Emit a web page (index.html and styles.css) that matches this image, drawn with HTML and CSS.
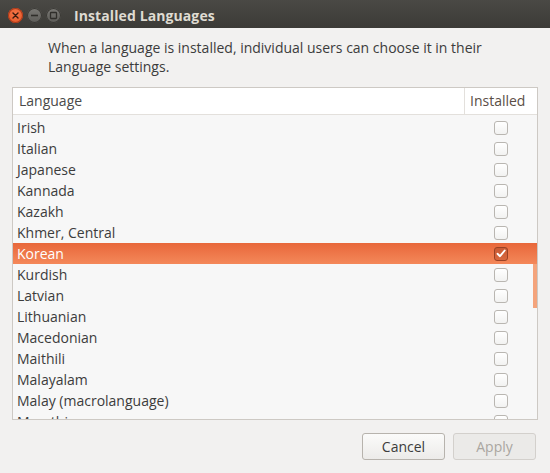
FILE: index.html
```html
<!DOCTYPE html>
<html>
<head>
<meta charset="utf-8">
<link rel="stylesheet" href="styles.css">
</head>
<body>
<div class="window">
  <div class="titlebar">
    <div class="wbtns">
      <span class="wb close"><svg width="15" height="15" viewBox="0 0 15 15"><path d="M5 5 L10 10 M10 5 L5 10" stroke="#3a1a0e" stroke-width="1.4" stroke-linecap="round"/></svg></span>
      <span class="wb"><svg width="15" height="15" viewBox="0 0 15 15"><path d="M4 7.5 H11" stroke="#2f2e2a" stroke-width="1.6"/></svg></span>
      <span class="wb"><svg width="15" height="15" viewBox="0 0 15 15"><rect x="4.5" y="4.5" width="6" height="6" rx="0.8" fill="none" stroke="#2f2e2a" stroke-width="1.3"/></svg></span>
    </div>
    <div class="title">Installed Languages</div>
  </div>
  <div class="content">
    <p class="desc">When a language is installed, individual users can choose it in their Language settings.</p>
    <div class="table">
      <div class="thead">
        <div class="th lang">Language</div>
        <div class="th inst">Installed</div>
      </div>
      <div class="tbody">
        <div class="row"><span class="name">Irish</span><span class="cb"></span></div>
        <div class="row"><span class="name">Italian</span><span class="cb"></span></div>
        <div class="row"><span class="name">Japanese</span><span class="cb"></span></div>
        <div class="row"><span class="name">Kannada</span><span class="cb"></span></div>
        <div class="row"><span class="name">Kazakh</span><span class="cb"></span></div>
        <div class="row"><span class="name">Khmer, Central</span><span class="cb"></span></div>
        <div class="row sel"><span class="name">Korean</span><span class="cb on"><svg width="10" height="9" viewBox="0 0 10 9"><path d="M1.5 4.8 L4 7.2 L8.7 1.5" fill="none" stroke="#fff" stroke-width="1.9" stroke-linecap="round" stroke-linejoin="round"/></svg></span></div>
        <div class="row"><span class="name">Kurdish</span><span class="cb"></span></div>
        <div class="row"><span class="name">Latvian</span><span class="cb"></span></div>
        <div class="row"><span class="name">Lithuanian</span><span class="cb"></span></div>
        <div class="row"><span class="name">Macedonian</span><span class="cb"></span></div>
        <div class="row"><span class="name">Maithili</span><span class="cb"></span></div>
        <div class="row"><span class="name">Malayalam</span><span class="cb"></span></div>
        <div class="row"><span class="name">Malay (macrolanguage)</span><span class="cb"></span></div>
        <div class="row"><span class="name">Marathi</span><span class="cb"></span></div>
        <div class="scroll"></div>
      </div>
    </div>
    <div class="buttons">
      <button class="btn">Cancel</button>
      <button class="btn disabled">Apply</button>
    </div>
  </div>
</div>
</body>
</html>
```
FILE: styles.css
```css
* { box-sizing: border-box; }
html, body { margin: 0; padding: 0; }
body {
  width: 550px;
  height: 473px;
  overflow: hidden;
  font-family: "Open Sans", "Noto Sans", sans-serif;
  background: #f2f1f0;
}
.window {
  width: 550px;
  height: 473px;
  display: flex;
  flex-direction: column;
  background: #f2f1f0;
}
.titlebar {
  height: 28px;
  flex: none;
  display: flex;
  align-items: center;
  background: linear-gradient(#4a4945, #3c3b37);
  padding-left: 8px;
}
.wbtns { display: flex; gap: 4px; margin-top: 2px; }
.wb {
  width: 15px;
  height: 15px;
  border-radius: 50%;
  background: linear-gradient(#7a7975, #5c5b57);
  box-shadow: inset 0 0 0 1px #3a3935;
  display: flex;
}
.wb.close {
  background: radial-gradient(circle at 50% 40%, #f7774a, #e0501f);
  box-shadow: inset 0 0 0 1px #a8391a;
}
.title {
  margin-left: 13px;
  margin-top: 2px;
  color: #dfdbd2;
  font-weight: bold;
  font-size: 14px;
  letter-spacing: 0.1px;
}
.content {
  flex: 1;
  display: flex;
  flex-direction: column;
  padding: 10px 12px 0 12px;
}
.desc {
  margin: 0 0 11px 36px;
  font-size: 14px;
  line-height: 19px;
  color: #3c3c3c;
  width: 470px;
}
.table {
  height: 333px;
  width: 526px;
  border: 1px solid #cdc9c4;
  background: #f7f7f7;
  display: flex;
  flex-direction: column;
  overflow: hidden;
}
.thead {
  height: 27px;
  flex: none;
  display: flex;
  background: #ffffff;
  border-bottom: 1px solid #e3e0dc;
}
.th {
  font-size: 14px;
  line-height: 26px;
  color: #4a4a4a;
}
.th.lang { flex: 1; padding-left: 6px; }
.th.inst {
  width: 73px;
  border-left: 1px solid #e3e0dc;
  padding-left: 5px;
  color: #5a4e46;
}
.tbody {
  position: relative;
  padding-top: 2px;
}
.row {
  height: 21px;
  display: flex;
  align-items: center;
  font-size: 14px;
  color: #3c3c3c;
}
.row .name { flex: 1; padding-left: 4px; }
.cb {
  width: 14px;
  height: 14px;
  border: 1px solid #b9b6b1;
  border-radius: 3px;
  background: linear-gradient(#ffffff, #f2f2f1);
  margin-right: 29px;
  display: flex;
  align-items: center;
  justify-content: center;
}
.row.sel {
  background: linear-gradient(#e8673a, #f4885a);
  color: #ffffff;
}
.cb.on {
  background: linear-gradient(#c85a34, #d9683e);
  border-color: #9a4225;
}
.scroll {
  position: absolute;
  right: 0;
  top: 149px;
  width: 4px;
  height: 44px;
  background: #f4a47c;
}
.buttons {
  display: flex;
  justify-content: flex-end;
  gap: 8px;
  margin-top: 13px;
  padding-right: 2px;
}
.btn {
  width: 83px;
  height: 27px;
  border: 1px solid #b7b3ad;
  border-radius: 3px;
  background: linear-gradient(#fbfbfa, #ecebe9);
  font-family: "Open Sans", "Noto Sans", sans-serif;
  font-size: 14px;
  color: #3c3c3c;
  padding: 0;
}
.btn.disabled {
  background: #ebeae8;
  border-color: #d3d0cc;
  color: #aaa6a0;
}
```
